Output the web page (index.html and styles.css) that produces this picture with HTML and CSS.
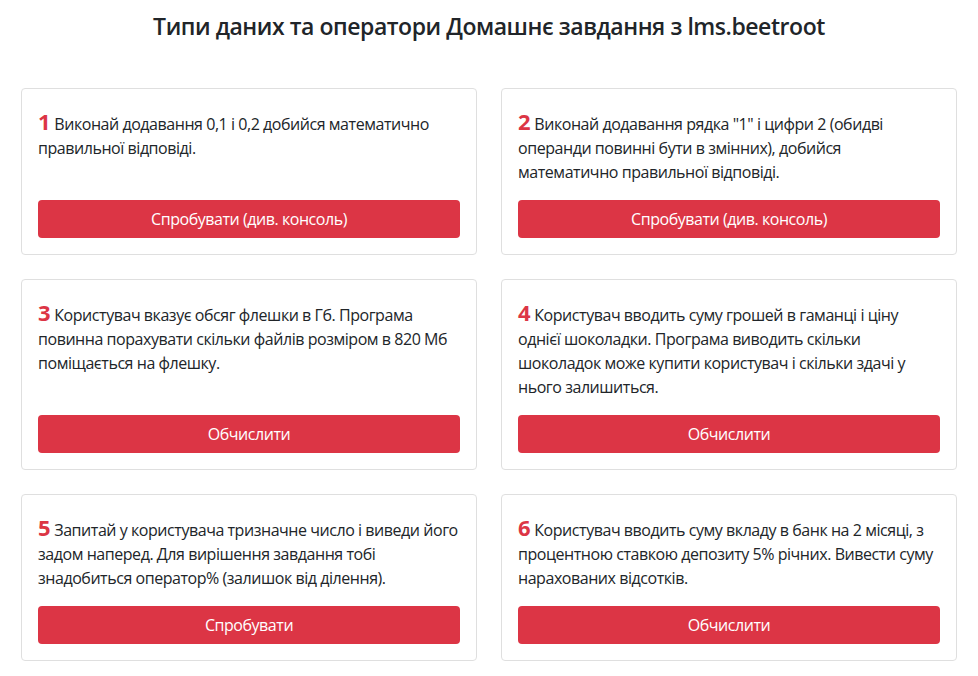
FILE: index.html
```html
<!DOCTYPE html>
<html lang="uk">
<head>
<meta charset="utf-8">
<title>Типи даних та оператори</title>
<link rel="stylesheet" href="styles.css">
</head>
<body>
<div class="container">
  <h1 class="title">Типи даних та оператори Домашнє завдання з lms.beetroot</h1>
  <div class="grid">
    <div class="card">
      <p class="task"><span class="num">1</span> Виконай додавання 0,1 і 0,2 добийся математично правильної відповіді.</p>
      <button class="btn">Спробувати (див. консоль)</button>
    </div>
    <div class="card">
      <p class="task"><span class="num">2</span> Виконай додавання рядка "1" і цифри 2 (обидві операнди повинні бути в змінних), добийся математично правильної відповіді.</p>
      <button class="btn">Спробувати (див. консоль)</button>
    </div>
    <div class="card">
      <p class="task"><span class="num">3</span> Користувач вказує обсяг флешки в Гб. Програма повинна порахувати скільки файлів розміром в 820 Мб поміщається на флешку.</p>
      <button class="btn">Обчислити</button>
    </div>
    <div class="card">
      <p class="task"><span class="num">4</span> Користувач вводить суму грошей в гаманці і ціну однієї шоколадки. Програма виводить скільки шоколадок може купити користувач і скільки здачі у нього залишиться.</p>
      <button class="btn">Обчислити</button>
    </div>
    <div class="card">
      <p class="task"><span class="num">5</span> Запитай у користувача тризначне число і виведи його задом наперед. Для вирішення завдання тобі знадобиться оператор% (залишок від ділення).</p>
      <button class="btn">Спробувати</button>
    </div>
    <div class="card">
      <p class="task"><span class="num">6</span> Користувач вводить суму вкладу в банк на 2 місяці, з процентною ставкою депозиту 5% річних. Вивести суму нарахованих відсотків.</p>
      <button class="btn">Обчислити</button>
    </div>
  </div>
</div>
</body>
</html>
```

FILE: styles.css
```css
* { box-sizing: border-box; }
html, body { margin: 0; padding: 0; background: #fff; }
body {
  font-family: "Open Sans", "Noto Sans", sans-serif;
  font-size: 16px;
  line-height: 24px;
  letter-spacing: -0.45px;
  color: #212529;
}
.container {
  width: 936px;
  margin: 0 auto;
  padding-top: 12px;
}
.title {
  margin: 0 0 47px;
  font-size: 23px;
  line-height: 29px;
  font-weight: 600;
  letter-spacing: -0.45px;
  text-align: center;
}
.grid {
  display: grid;
  grid-template-columns: 1fr 1fr;
  column-gap: 24px;
  row-gap: 24px;
}
.card {
  display: flex;
  flex-direction: column;
  border: 1px solid #dfdfdf;
  border-radius: 4px;
  padding: 23px 16px 16px;
}
.task {
  margin: 0 0 16px;
}
.num {
  color: #dc3545;
  font-weight: 700;
  font-size: 22px;
  line-height: 0;
  letter-spacing: 0;
}
.btn {
  margin-top: auto;
  height: 38px;
  border: 0;
  border-radius: 4px;
  background: #dc3545;
  color: #fff;
  font-family: inherit;
  font-size: 16px;
  line-height: 24px;
  letter-spacing: -0.45px;
}
```
